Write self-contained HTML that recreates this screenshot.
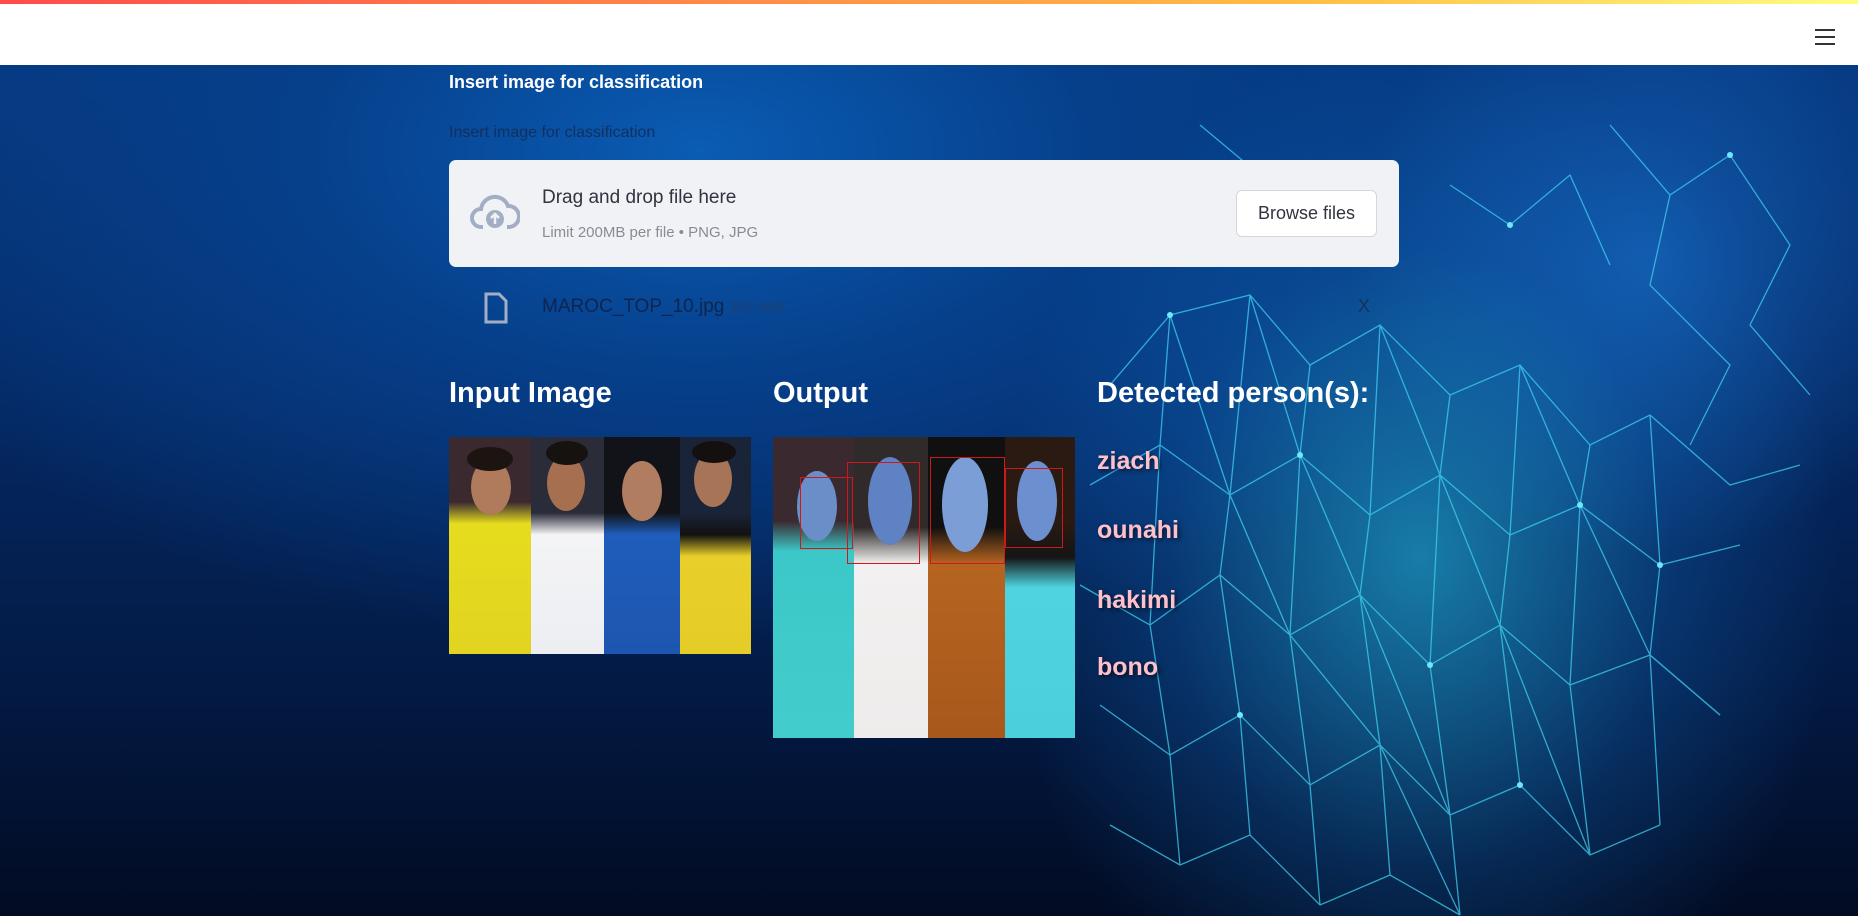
<!DOCTYPE html>
<html><head><meta charset="utf-8"><style>
*{margin:0;padding:0;box-sizing:border-box}
body{width:1858px;height:916px;overflow:hidden;position:relative;font-family:"Liberation Sans",sans-serif;
background:
radial-gradient(ellipse 420px 520px at 1420px 560px, rgba(40,200,240,.55), rgba(20,120,210,.25) 60%, transparent 100%),
radial-gradient(ellipse 300px 300px at 1650px 260px, rgba(30,130,230,.5), transparent 100%),
radial-gradient(ellipse 900px 500px at 700px 150px, #0a5cb4 0%, #063f8a 45%, transparent 100%),
linear-gradient(180deg,#063b85 0%,#052a66 40%,#031a44 75%,#020b22 100%);}
.bar{position:absolute;left:0;top:0;width:1858px;height:4px;background:linear-gradient(90deg,#ff4b4b,#ffbd45 70%,#fffd80)}
.hdr{position:absolute;left:0;top:4px;width:1858px;height:61px;background:#fff}
.ham{position:absolute;left:1815px;top:29px;width:20px}
.ham i{display:block;height:2px;background:#333;margin-bottom:5px}
.abs{position:absolute}
.t1{left:449px;top:72px;color:#fff;font-weight:bold;font-size:18px}
.t2{left:449px;top:124px;color:#12305e;font-size:16px}
.up{left:449px;top:160px;width:950px;height:107px;background:#f0f2f6;border-radius:7px}
.btn{left:1236px;top:190px;width:141px;height:47px;background:#fff;border:1px solid #d6d6d9;border-radius:6px;font-size:18px;color:#31333f;text-align:center;line-height:45px}
.h{color:#fff;font-weight:bold;font-size:29px;top:377px}
.nm{left:1097px;color:#ffc0cb;font-weight:bold;font-size:25px;text-shadow:2px 2px 4px rgba(0,0,0,.6)}
.img{position:absolute;overflow:hidden}
.strips{position:absolute;left:0;top:0;width:100%;height:100%;display:flex}
.strips>div{position:relative;height:100%;overflow:hidden;flex-shrink:0}
.face{position:absolute;border-radius:50%}
.box{position:absolute;border:1.5px solid #d01818}
</style></head><body>
<svg class="abs" style="left:1050px;top:65px" width="808" height="851" viewBox="0 0 808 851">
<g stroke="#3fd0f0" stroke-width="1.3" fill="none" opacity=".75">
<polyline points="60,320 120,250 200,230 260,300 330,260 400,330 470,300 540,380 600,350 680,420 750,400"/>
<polyline points="40,420 110,380 180,430 250,390 320,450 390,410 460,470 530,440 610,500 690,480"/>
<polyline points="30,520 100,560 170,510 240,570 310,530 380,600 450,560 520,620 600,590 670,650"/>
<polyline points="50,640 120,690 190,650 260,720 330,680 400,750 470,720 540,790 610,760"/>
<polyline points="60,760 130,800 200,770 270,840 340,810 410,850"/>
<polyline points="120,250 110,380 100,560 120,690 130,800"/>
<polyline points="200,230 180,430 170,510 190,650 200,770"/>
<polyline points="260,300 250,390 240,570 260,720 270,840"/>
<polyline points="330,260 320,450 310,530 330,680 340,810"/>
<polyline points="400,330 390,410 380,600 400,750 410,850"/>
<polyline points="470,300 460,470 450,560 470,720"/>
<polyline points="540,380 530,440 520,620 540,790"/>
<polyline points="600,350 610,500 600,590 610,760"/>
<polyline points="120,250 180,430 240,570 330,680 410,850"/>
<polyline points="200,230 250,390 310,530 400,750"/>
<polyline points="330,260 390,410 450,560 540,790"/>
<polyline points="470,300 530,440 600,590 670,650"/>
<polyline points="560,60 620,130 680,90 740,180 700,260 760,330"/>
<polyline points="620,130 600,220 680,300 640,380"/>
<polyline points="150,60 210,110 180,170 260,150"/>
<polyline points="400,120 460,160 520,110 560,200"/>
</g>
<g fill="#6fe8ff"><circle cx="120" cy="250" r="3"/><circle cx="250" cy="390" r="3"/><circle cx="380" cy="600" r="3"/><circle cx="530" cy="440" r="3"/><circle cx="610" cy="500" r="3"/><circle cx="190" cy="650" r="3"/><circle cx="470" cy="720" r="3"/><circle cx="680" cy="90" r="3"/><circle cx="460" cy="160" r="3"/></g>
</svg>
<div class="bar"></div><div class="hdr"></div>
<div class="ham"><i></i><i></i><i></i></div>
<div class="abs t1">Insert image for classification</div>
<div class="abs t2">Insert image for classification</div>
<div class="abs up"></div>
<svg class="abs" style="left:470px;top:193px" width="50" height="40" viewBox="0 0 50 40"><path d="M13 34H11A9 9 0 0 1 11 16A14 14 0 0 1 38 13A10 10 0 0 1 39 34H37" fill="none" stroke="#a3aec4" stroke-width="4"/><circle cx="25" cy="26" r="9" fill="#a3aec4"/><path d="M25 31V22M21 25L25 21L29 25" stroke="#f0f2f6" stroke-width="2.5" fill="none"/></svg>
<div class="abs" style="left:542px;top:187px;font-size:19px;color:#31333f">Drag and drop file here</div>
<div class="abs" style="left:542px;top:224px;font-size:15px;color:#888b96">Limit 200MB per file • PNG, JPG</div>
<div class="abs btn">Browse files</div>
<svg class="abs" style="left:483px;top:291px" width="26" height="34" viewBox="0 0 26 34"><path d="M3 3H16L23 10V31H3Z" fill="none" stroke="#a3aec4" stroke-width="3"/></svg>
<div class="abs" style="left:542px;top:296px;font-size:19px;color:#0e2550">MAROC_TOP_10.jpg <span style="font-size:14px;color:#1f3f6e">162.9KB</span></div>
<div class="abs" style="left:1358px;top:296px;font-size:18px;color:#14325e">X</div>
<div class="abs h" style="left:449px">Input Image</div>
<div class="abs h" style="left:773px">Output</div>
<div class="abs h" style="left:1097px">Detected person(s):</div>
<div class="abs nm" style="top:447px">ziach</div>
<div class="abs nm" style="top:516px">ounahi</div>
<div class="abs nm" style="top:586px">hakimi</div>
<div class="abs nm" style="top:653px">bono</div>

<div class="img" style="left:449px;top:437px;width:302px;height:217px"><div class="strips">
<div style="width:82px;background:linear-gradient(#3a2a30 0,#3a2a30 30%,#e6dc1e 40%,#e2d420)"><div class="face" style="left:22px;top:22px;width:40px;height:56px;background:#b07a5c"></div><div class="face" style="left:18px;top:10px;width:46px;height:24px;background:#1b1410"></div></div>
<div style="width:73px;background:linear-gradient(#2a2c3a 0,#2a2c3a 35%,#f4f4f6 45%,#eceef2)"><div class="face" style="left:16px;top:18px;width:38px;height:56px;background:#a56f50"></div><div class="face" style="left:15px;top:4px;width:42px;height:24px;background:#161210"></div></div>
<div style="width:76px;background:linear-gradient(#111318 0,#111318 35%,#1f5dbb 45%,#1d56b0)"><div class="face" style="left:18px;top:24px;width:40px;height:60px;background:#b07d60"></div></div>
<div style="width:71px;background:linear-gradient(#1a2438 0,#1a2438 35%,#111 45%,#e9cf2a 55%,#e6cc26)"><div class="face" style="left:14px;top:14px;width:38px;height:56px;background:#a87458"></div><div class="face" style="left:12px;top:4px;width:44px;height:22px;background:#151010"></div></div>
</div></div>

<div class="img" style="left:773px;top:437px;width:302px;height:301px"><div class="strips">
<div style="width:81px;background:linear-gradient(#3a2a30 0,#3a2a30 28%,#3cc8c8 38%,#44cccc)"><div class="face" style="left:24px;top:34px;width:40px;height:70px;background:#6a8ec8"></div></div>
<div style="width:74px;background:linear-gradient(#302a2a 0,#302a2a 30%,#f2f0f0 42%,#eeeceb)"><div class="face" style="left:14px;top:20px;width:44px;height:88px;background:#5f82c4"></div></div>
<div style="width:77px;background:linear-gradient(#101010 0,#101010 30%,#b66420 42%,#a8581c)"><div class="face" style="left:14px;top:20px;width:46px;height:95px;background:#7b9ed6"></div></div>
<div style="width:70px;background:linear-gradient(#2a1a12 0,#2a1a12 28%,#151515 40%,#4ed4e0 50%,#4ad0dc)"><div class="face" style="left:12px;top:24px;width:40px;height:80px;background:#6c8fd0"></div></div>
</div>
<div class="box" style="left:27px;top:40px;width:53px;height:72px"></div>
<div class="box" style="left:74px;top:25px;width:73px;height:102px"></div>
<div class="box" style="left:157px;top:20px;width:75px;height:107px"></div>
<div class="box" style="left:232px;top:31px;width:58px;height:80px"></div>
</div>
</body></html>
